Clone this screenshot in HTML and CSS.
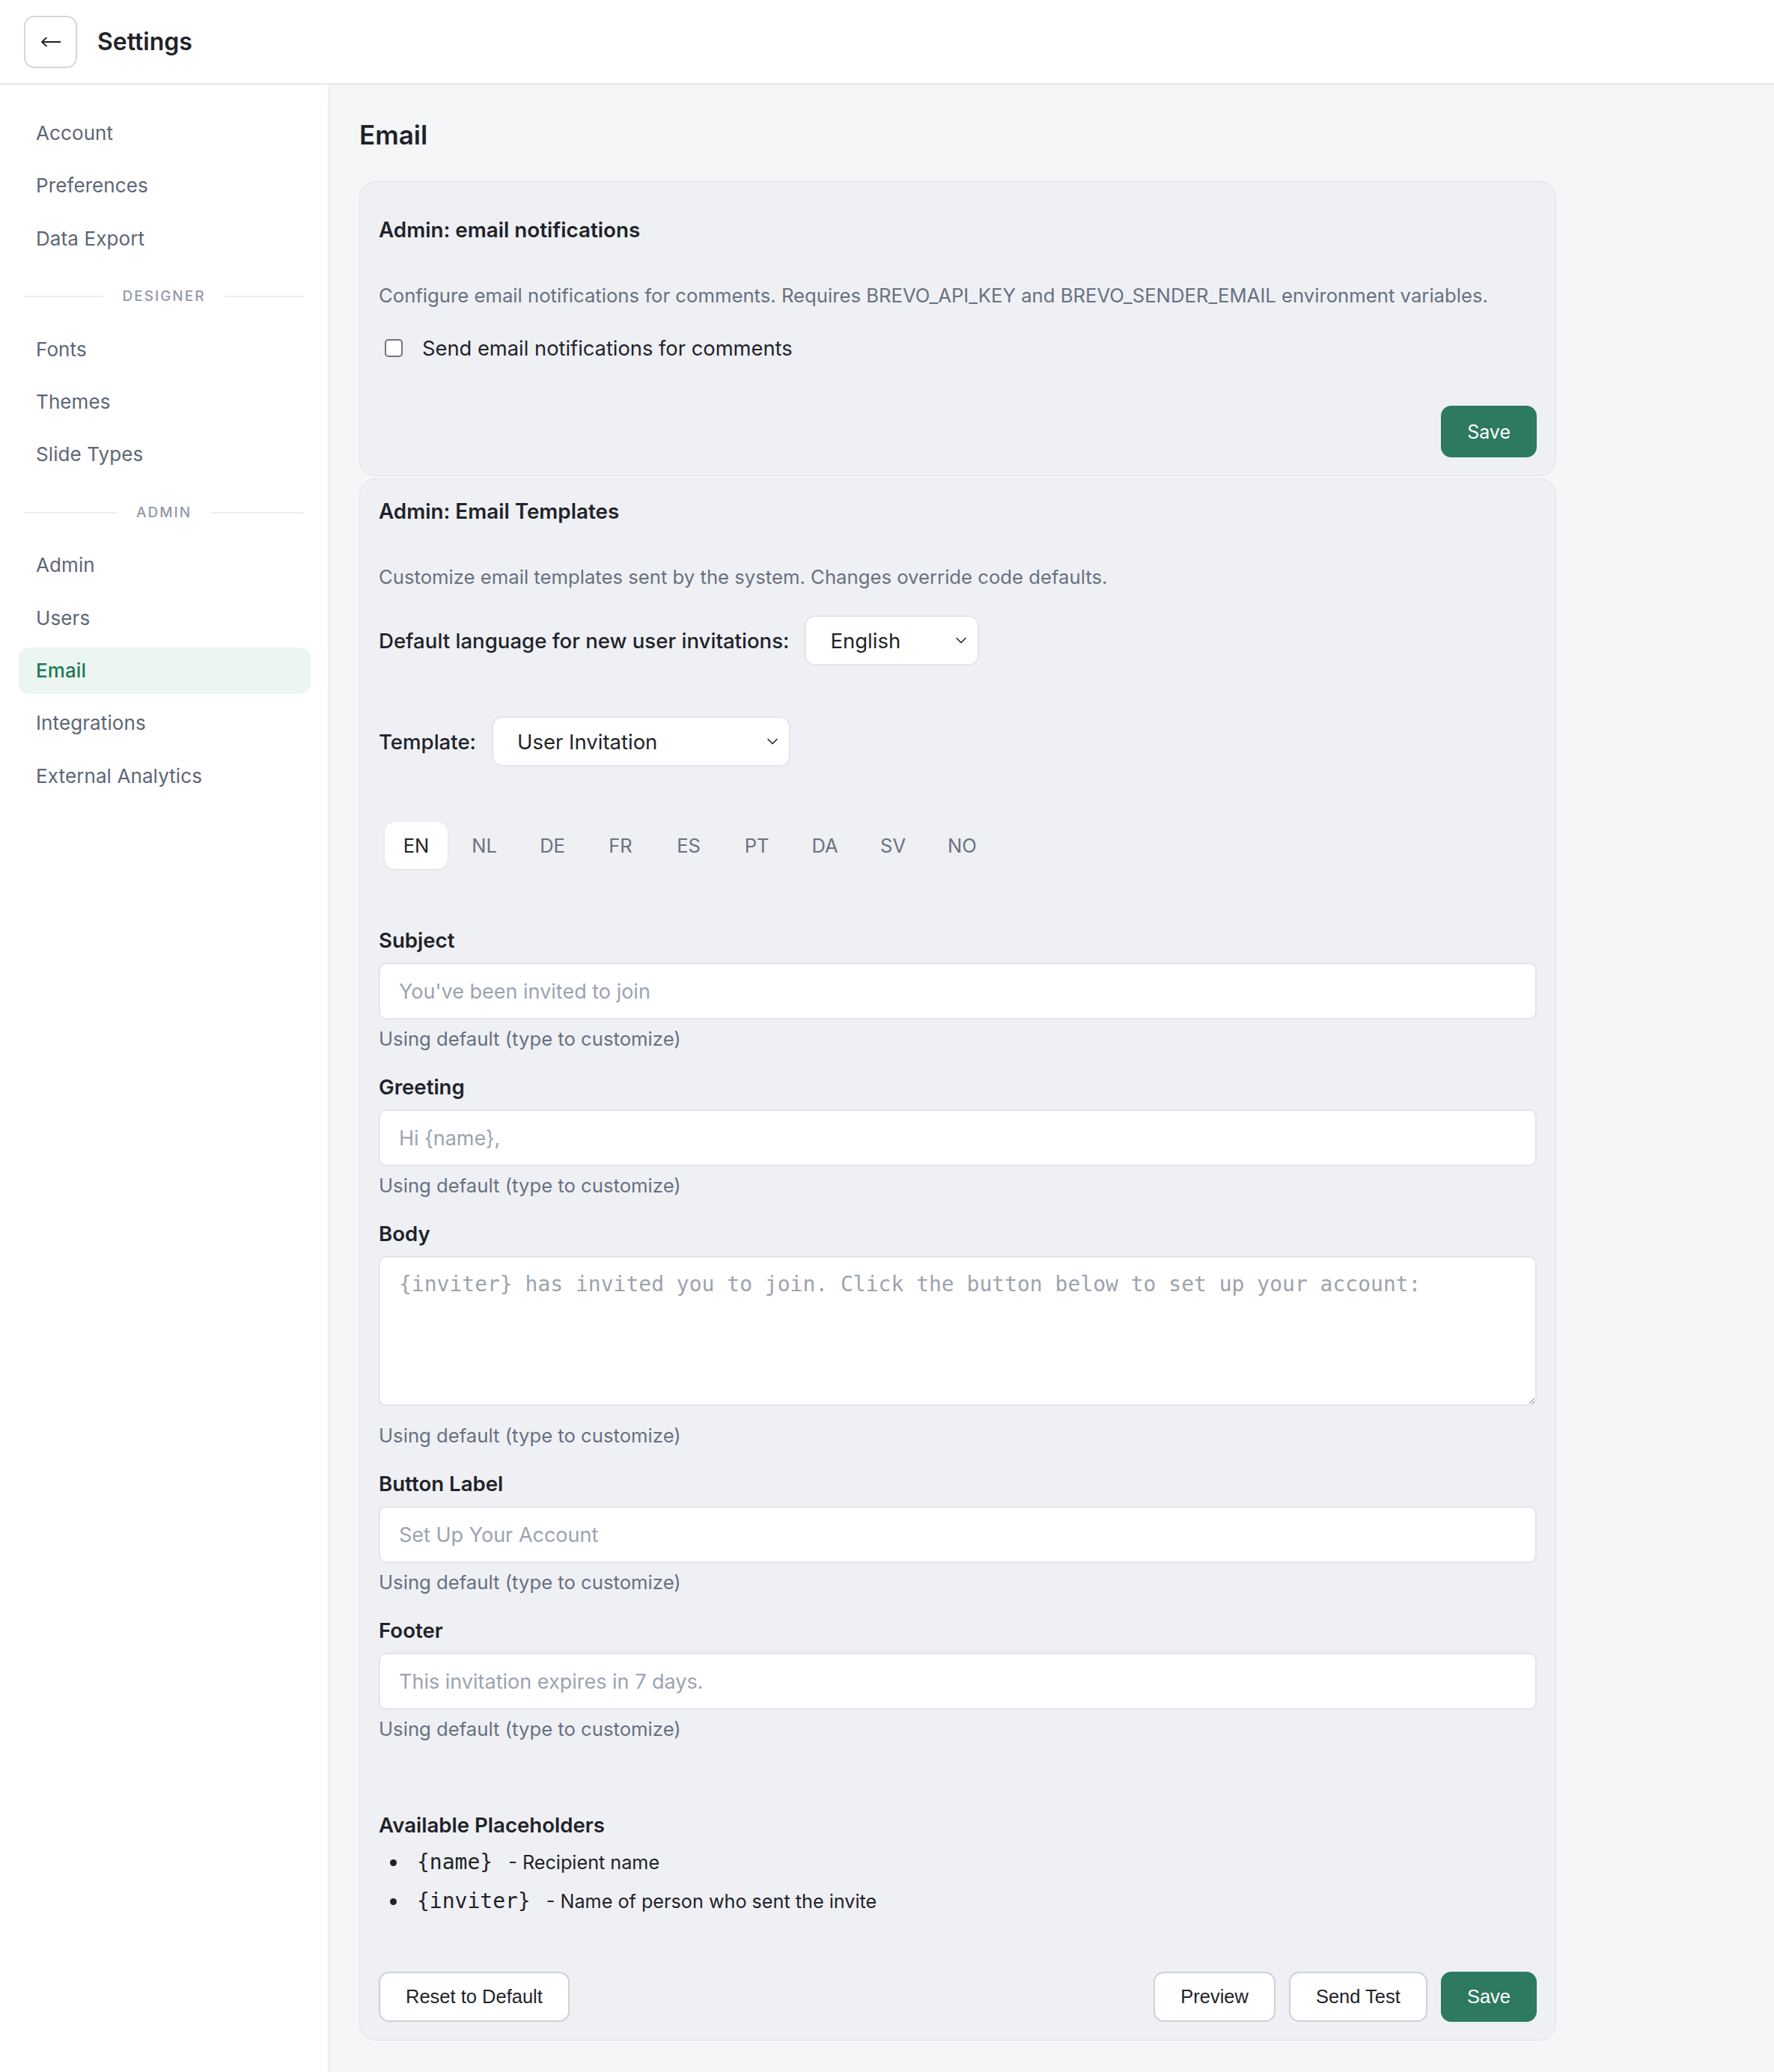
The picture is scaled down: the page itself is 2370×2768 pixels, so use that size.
FILE: index.html
```html
<!DOCTYPE html>
<html lang="en">
<head>
<meta charset="utf-8">
<title>Settings</title>
<link rel="stylesheet" href="styles.css">
</head>
<body>
<header class="topbar">
  <button class="back-btn" type="button" aria-label="Back">
    <svg class="back-icon" viewBox="0 0 28 16" width="28" height="16"><path d="M26.5 8 H2 M8 2.5 L2 8 L8 13.5" fill="none" stroke="#1f2329" stroke-width="1.8" stroke-linecap="round" stroke-linejoin="round"/></svg>
  </button>
  <h1 class="app-title">Settings</h1>
</header>
<div class="layout">
  <aside class="sidebar">
    <nav class="nav">
      <a class="nav-item">Account</a>
      <a class="nav-item">Preferences</a>
      <a class="nav-item">Data Export</a>
      <div class="nav-divider"><span class="nav-divider-label">Designer</span></div>
      <a class="nav-item">Fonts</a>
      <a class="nav-item">Themes</a>
      <a class="nav-item">Slide Types</a>
      <div class="nav-divider"><span class="nav-divider-label">Admin</span></div>
      <a class="nav-item">Admin</a>
      <a class="nav-item">Users</a>
      <a class="nav-item nav-item--active">Email</a>
      <a class="nav-item">Integrations</a>
      <a class="nav-item">External Analytics</a>
    </nav>
  </aside>
  <main class="main">
    <h2 class="page-title">Email</h2>

    <section class="card card--notify">
      <h3 class="card-title card-title--spaced">Admin: email notifications</h3>
      <p class="card-desc">Configure email notifications for comments. Requires BREVO_API_KEY and BREVO_SENDER_EMAIL environment variables.</p>
      <label class="check-row">
        <input class="checkbox" type="checkbox">
        <span>Send email notifications for comments</span>
      </label>
      <div class="card-actions card-actions--end">
        <button class="btn btn--primary btn--ui" type="button">Save</button>
      </div>
    </section>

    <section class="card">
      <h3 class="card-title">Admin: Email Templates</h3>
      <p class="card-desc">Customize email templates sent by the system. Changes override code defaults.</p>

      <div class="inline-row inline-row--lang">
        <span class="inline-label">Default language for new user invitations:</span>
        <div class="select select--lang">
          <span>English</span>
          <svg class="chevron" viewBox="0 0 14 9" width="14" height="9"><path d="M1 1.5 L7 7.5 L13 1.5" fill="none" stroke="#222" stroke-width="1.6" stroke-linecap="round" stroke-linejoin="round"/></svg>
        </div>
      </div>

      <div class="inline-row inline-row--template">
        <span class="inline-label">Template:</span>
        <div class="select select--template">
          <span>User Invitation</span>
          <svg class="chevron" viewBox="0 0 14 9" width="14" height="9"><path d="M1 1.5 L7 7.5 L13 1.5" fill="none" stroke="#222" stroke-width="1.6" stroke-linecap="round" stroke-linejoin="round"/></svg>
        </div>
      </div>

      <div class="tabs">
        <span class="tab tab--active">EN</span>
        <span class="tab">NL</span>
        <span class="tab">DE</span>
        <span class="tab">FR</span>
        <span class="tab">ES</span>
        <span class="tab">PT</span>
        <span class="tab">DA</span>
        <span class="tab">SV</span>
        <span class="tab">NO</span>
      </div>

      <div class="fields">
        <div class="field">
          <label class="field-label">Subject</label>
          <input class="text-input" type="text" placeholder="You've been invited to join">
          <p class="field-hint">Using default (type to customize)</p>
        </div>
        <div class="field">
          <label class="field-label">Greeting</label>
          <input class="text-input" type="text" placeholder="Hi {name},">
          <p class="field-hint">Using default (type to customize)</p>
        </div>
        <div class="field">
          <label class="field-label">Body</label>
          <textarea class="text-area" placeholder="{inviter} has invited you to join. Click the button below to set up your account:"></textarea>
          <p class="field-hint field-hint--after-area">Using default (type to customize)</p>
        </div>
        <div class="field">
          <label class="field-label">Button Label</label>
          <input class="text-input" type="text" placeholder="Set Up Your Account">
          <p class="field-hint">Using default (type to customize)</p>
        </div>
        <div class="field">
          <label class="field-label">Footer</label>
          <input class="text-input" type="text" placeholder="This invitation expires in 7 days.">
          <p class="field-hint">Using default (type to customize)</p>
        </div>
      </div>

      <h4 class="placeholders-title">Available Placeholders</h4>
      <ul class="placeholders">
        <li class="ph-item"><code class="ph-code">{name}</code> - Recipient name</li>
        <li class="ph-item"><code class="ph-code">{inviter}</code> - Name of person who sent the invite</li>
      </ul>

      <div class="card-actions card-actions--split">
        <button class="btn btn--outline" type="button">Reset to Default</button>
        <div class="btn-group">
          <button class="btn btn--outline" type="button">Preview</button>
          <button class="btn btn--outline" type="button">Send Test</button>
          <button class="btn btn--primary" type="button">Save</button>
        </div>
      </div>
    </section>
  </main>
</div>
</body>
</html>
```

FILE: styles.css
```css
* { box-sizing: border-box; }

html, body {
  margin: 0;
  padding: 0;
}

body {
  font-family: Inter, "Noto Sans", "Liberation Sans", sans-serif;
  color: #1f2329;
  background: #f5f6f8;
  min-height: 2768px;
}

/* Top bar */
.topbar {
  height: 113px;
  background: #ffffff;
  border-bottom: 2px solid #e4e6eb;
  display: flex;
  align-items: center;
  padding-left: 32px;
  gap: 27px;
}

.back-btn {
  width: 71px;
  height: 70px;
  border: 2px solid #d3d7de;
  border-radius: 14px;
  background: #ffffff;
  display: flex;
  align-items: center;
  justify-content: center;
  padding: 0;
}

.back-icon { display: block; }

.app-title {
  margin: 0;
  font-size: 32px;
  font-weight: 600;
  line-height: 40px;
  color: #1f2329;
}

/* Layout */
.layout {
  display: flex;
  min-height: 2655px;
}

.sidebar {
  width: 440px;
  flex: 0 0 440px;
  background: #ffffff;
  border-right: 2px solid #eceef1;
  padding: 34px 23px 0 25px;
}

.nav {
  display: flex;
  flex-direction: column;
  gap: 8.4px;
}

.nav-item {
  display: block;
  height: 62px;
  line-height: 62px;
  padding: 0 23px;
  font-size: 26px;
  color: #5d6676;
  border-radius: 14px;
  letter-spacing: 0.1px;
}

.nav-item--active {
  background: #ecf5f1;
  color: #217a56;
  font-weight: 500;
}

.nav-divider {
  display: flex;
  align-items: center;
  gap: 26px;
  height: 20px;
  margin: 28px 9px 21px 7px;
}

.nav-divider::before,
.nav-divider::after {
  content: "";
  flex: 1;
  height: 2px;
  background: #eceef1;
}

.nav-divider-label {
  font-size: 19px;
  font-weight: 500;
  letter-spacing: 2px;
  text-transform: uppercase;
  color: #9299a6;
  line-height: 20px;
}

/* Main */
.main {
  flex: 1;
  padding: 45px 42px 43px 40px;
}

.page-title {
  margin: 0 0 40px 0;
  font-size: 35px;
  line-height: 44px;
  font-weight: 600;
  color: #1f2329;
}

.card {
  width: 1599px;
  background: #eef0f4;
  border: 1px solid #e0e3e8;
  border-radius: 22px;
  padding: 25px 25px 24px 25px;
}

.card--notify {
  margin-bottom: 3px;
}

.card-title {
  margin: 0;
  font-size: 27.8px;
  line-height: 36px;
  font-weight: 600;
  color: #1f2329;
}

.card-title--spaced {
  margin-top: 21px;
}

.card-desc {
  margin: 52px 0 0 0;
  font-size: 25.7px;
  line-height: 36px;
  color: #687080;
}

.check-row {
  display: flex;
  align-items: center;
  gap: 26px;
  margin-top: 34px;
  padding-left: 8px;
  height: 36px;
  font-size: 27.3px;
  color: #1f2329;
}

.checkbox {
  appearance: none;
  -webkit-appearance: none;
  width: 24px;
  height: 24px;
  margin: 0;
  border: 2px solid #6f7480;
  border-radius: 5px;
  background: #ffffff;
}

.card-actions {
  display: flex;
  align-items: center;
}

.card-actions--end {
  justify-content: flex-end;
  margin-top: 59px;
}

.card-actions--split {
  justify-content: space-between;
  margin-top: 68px;
}

.btn-group {
  display: flex;
  gap: 18px;
}

.btn {
  height: 67px;
  padding: 0 34px;
  border-radius: 14px;
  font-family: "Liberation Sans", Arial, sans-serif;
  font-size: 25.5px;
  color: #1f2329;
  background: #ffffff;
  border: 2px solid #cdd1d8;
}

.btn--primary {
  background: #2d7a60;
  border-color: #2d7a60;
  color: #ffffff;
  padding: 0 33px;
}

.btn--ui {
  font-family: Inter, "Liberation Sans", sans-serif;
  height: 69px;
  font-size: 25px;
  padding: 0 33px;
}

/* Inline select rows */
.inline-row {
  display: flex;
  align-items: center;
  gap: 21px;
}

.inline-row--lang { margin-top: 33px; }
.inline-row--template { margin-top: 68px; }

.inline-label {
  font-size: 27.6px;
  font-weight: 500;
  color: #1f2329;
}

.select {
  height: 67px;
  background: #ffffff;
  border: 2px solid #e3e5ea;
  border-radius: 14px;
  display: flex;
  align-items: center;
  justify-content: space-between;
  padding: 0 15px 0 32px;
  font-size: 27.5px;
  color: #1f2329;
}

.select--lang { width: 233px; }
.select--template { width: 399px; }

.chevron { flex: 0 0 auto; }

/* Tabs */
.tabs {
  display: flex;
  gap: 7px;
  margin-top: 67px;
  padding: 7px 8px;
}

.tab {
  height: 63px;
  line-height: 63px;
  padding: 0 24px;
  font-size: 25.5px;
  color: #6b7280;
  border-radius: 14px;
  min-width: 84px;
  text-align: center;
}

.tab--active {
  background: #ffffff;
  color: #1f2329;
  box-shadow: 0 1px 3px rgba(0, 0, 0, 0.08);
}

/* Fields */
.fields {
  display: flex;
  flex-direction: column;
  gap: 29px;
  margin-top: 70px;
}

.field-label {
  display: block;
  font-size: 27.6px;
  line-height: 36px;
  font-weight: 600;
  color: #1f2329;
  margin-bottom: 12px;
}

.text-input {
  display: block;
  width: 100%;
  height: 76px;
  background: #ffffff;
  border: 2px solid #e3e5ea;
  border-radius: 10px;
  padding: 0 25px;
  font-family: Inter, "Liberation Sans", sans-serif;
  font-size: 27px;
  color: #1f2329;
}

.text-input::placeholder {
  color: #9ca3af;
}

.text-area {
  display: block;
  width: 100%;
  height: 200px;
  background: #ffffff;
  border: 2px solid #e3e5ea;
  border-radius: 10px;
  padding: 16px 25px;
  font-family: "DejaVu Sans Mono", "Liberation Mono", monospace;
  font-size: 28px;
  line-height: 40px;
  color: #1f2329;
  resize: vertical;
}

.text-area::placeholder {
  color: #9ca3af;
}

.field-hint {
  margin: 9px 0 0 0;
  font-size: 25.7px;
  line-height: 34px;
  color: #687080;
}

.field-hint--after-area {
  margin-top: 23px;
}

/* Placeholders */
.placeholders-title {
  margin: 93px 0 0 0;
  font-size: 27.6px;
  line-height: 36px;
  font-weight: 600;
  color: #1f2329;
}

.placeholders {
  margin: 6px 0 0 0;
  padding: 0;
  list-style: none;
}

.ph-item {
  font-size: 25.2px;
  line-height: 51px;
  color: #1f2329;
}

.ph-item::before {
  content: "";
  display: inline-block;
  width: 9px;
  height: 9px;
  border-radius: 50%;
  background: #1f2329;
  vertical-align: middle;
  margin: -3px 27px 0 15px;
}

.ph-code {
  font-family: "DejaVu Sans Mono", "Liberation Mono", monospace;
  font-size: 28px;
  padding-right: 14px;
}
```
